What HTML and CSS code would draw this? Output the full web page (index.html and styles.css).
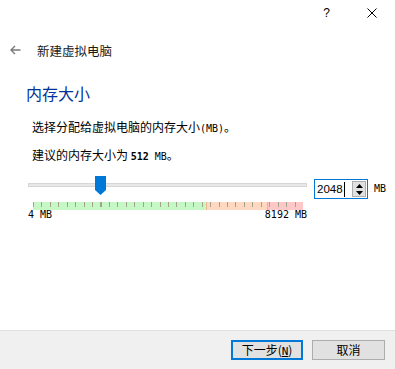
FILE: index.html
```html
<!DOCTYPE html>
<html lang="zh-CN">
<head>
<meta charset="UTF-8">
<meta name="viewport" content="width=device-width, initial-scale=1.0">
<title>新建虚拟电脑</title>
<link rel="stylesheet" href="styles.css">
</head>
<body>
<div class="window">
  <div class="titlebar">
    <span class="help">?</span>
    <svg class="close" width="10" height="10" viewBox="0 0 10 10">
      <path d="M0.5 0.5 L9.5 9.5 M9.5 0.5 L0.5 9.5" stroke="#000" stroke-width="1" fill="none"/>
    </svg>
  </div>

  <div class="header">
    <svg class="back" width="11" height="10" viewBox="0 0 11 10">
      <path d="M1 5 H10.5 M5 1 L1 5 L5 9" stroke="#7a7a7a" stroke-width="1.4" fill="none"/>
    </svg>
    <span class="title">新建虚拟电脑</span>
  </div>

  <div class="content">
    <h1 class="heading">内存大小</h1>
    <p class="desc">选择分配给虚拟电脑的内存大小<span class="latin">(MB)</span>。</p>
    <p class="desc">建议的内存大小为 <span class="latin"><b>512</b> MB</span>。</p>

    <div class="slider-row">
      <div class="slider">
        <div class="groove"></div>
        <svg class="thumb" style="left: 67px" width="11" height="19" viewBox="0 0 11 19">
          <path d="M0 0 H11 V14 L5.5 19 L0 14 Z" fill="#0078d7"/>
        </svg>
        <div class="ticks"></div>
      </div>
      <div class="spinbox">
        <span class="value">2048</span><span class="caret"></span>
        <div class="spinner">
          <div class="spin-btn"><svg width="7" height="4" viewBox="0 0 7 4"><path d="M3.5 0 L7 4 H0 Z" fill="#000"/></svg></div>
          <div class="spin-btn"><svg width="7" height="4" viewBox="0 0 7 4"><path d="M0 0 H7 L3.5 4 Z" fill="#000"/></svg></div>
        </div>
      </div>
      <span class="unit latin">MB</span>
    </div>

    <div class="scale-labels latin">
      <span>4 MB</span>
      <span>8192 MB</span>
    </div>
  </div>

  <div class="footer">
    <button class="btn btn-default">下一步(<u class="latin">N</u>)</button>
    <button class="btn">取消</button>
  </div>
</div>
</body>
</html>
```

FILE: styles.css
```css
body {
  margin: 0;
  padding: 0;
  background: #fff;
  color: #000;
  font-family: "Noto Sans CJK SC", "Noto Sans", sans-serif;
  font-size: 12px;
}

.window {
  display: flex;
  flex-direction: column;
  height: 100vh;
}

.titlebar {
  height: 25px;
  display: flex;
  align-items: center;
  justify-content: flex-end;
  padding-right: 18px;
}

.help {
  font-family: "Liberation Sans", sans-serif;
  font-size: 12px;
  line-height: 12px;
  margin-right: 37px;
}

.header {
  height: 24px;
  margin-top: 13px;
  display: flex;
  align-items: center;
  padding-left: 10px;
}

.back {
  margin-right: 16px;
}

.title {
  font-size: 12.5px;
  color: #1a1a1a;
}

.content {
  flex: 1;
  padding-left: 26px;
}

.heading {
  margin: 21px 0 0;
  font-size: 16px;
  line-height: 20px;
  font-weight: normal;
  color: #003399;
}

.desc {
  margin: 16px 0 0 6px;
  line-height: 16px;
}

.desc + .desc {
  margin-top: 10px;
}

.latin {
  font-family: "DejaVu Sans Mono", monospace;
  font-size: 10px;
}

.slider-row {
  display: flex;
  align-items: flex-start;
  margin: 11px 0 0 2px;
}

.slider {
  position: relative;
  width: 279px;
  height: 27px;
}

.groove {
  margin-top: 7px;
  height: 2px;
  border: 1px solid #d6d6d6;
  background: #e7e7e7;
}

.thumb {
  position: absolute;
  top: 0;
}

.ticks {
  margin: 15px 4px 0 5px;
  height: 8px;
  background:
    repeating-linear-gradient(to right, #a3a38c 0 1px, transparent 1px 8.4375px) top left / 100% 5px no-repeat,
    linear-gradient(to right, #c6f8c6 0 173px, #f0b890 173px 174px, #ffd8c2 174px 234px, #f4a8a0 234px 235px, #ffc8c8 235px);
}

.spinbox {
  display: flex;
  align-items: center;
  width: 52px;
  height: 18px;
  margin: 3px 0 0 7px;
  border: 1px solid #0078d7;
  background: #fff;
}

.value {
  font-family: "Liberation Sans", sans-serif;
  font-size: 11.5px;
  padding-left: 2px;
}

.caret {
  width: 1px;
  height: 15px;
  background: #000;
  margin-left: 1px;
}

.spinner {
  margin-left: auto;
  margin-right: 1px;
  width: 14px;
  height: 16px;
  display: flex;
  flex-direction: column;
  border: 1px solid #adadad;
  box-sizing: border-box;
  background: #e1e1e1;
}

.spin-btn {
  flex: 1;
  display: flex;
  align-items: center;
  justify-content: center;
}

.unit {
  margin: 3px 0 0 6px;
  line-height: 20px;
}

.scale-labels {
  display: flex;
  justify-content: space-between;
  width: 279px;
  margin: 5px 0 0 2px;
  line-height: 14px;
}

.footer {
  border-top: 1px solid #dfdfdf;
  background: #f0f0f0;
  height: 39px;
  box-sizing: border-box;
  padding: 9px 10px 0 0;
  display: flex;
  justify-content: flex-end;
  align-items: flex-start;
  gap: 9px;
}

.btn {
  font-family: "Noto Sans CJK SC", sans-serif;
  font-size: 12px;
  width: 73px;
  height: 20px;
  padding: 0;
  background: #e1e1e1;
  border: 1px solid #adadad;
  color: #000;
  line-height: 16px;
}

.btn-default {
  width: 72px;
  border: 2px solid #0078d7;
}

.btn u {
  font-size: 11px;
}
```
